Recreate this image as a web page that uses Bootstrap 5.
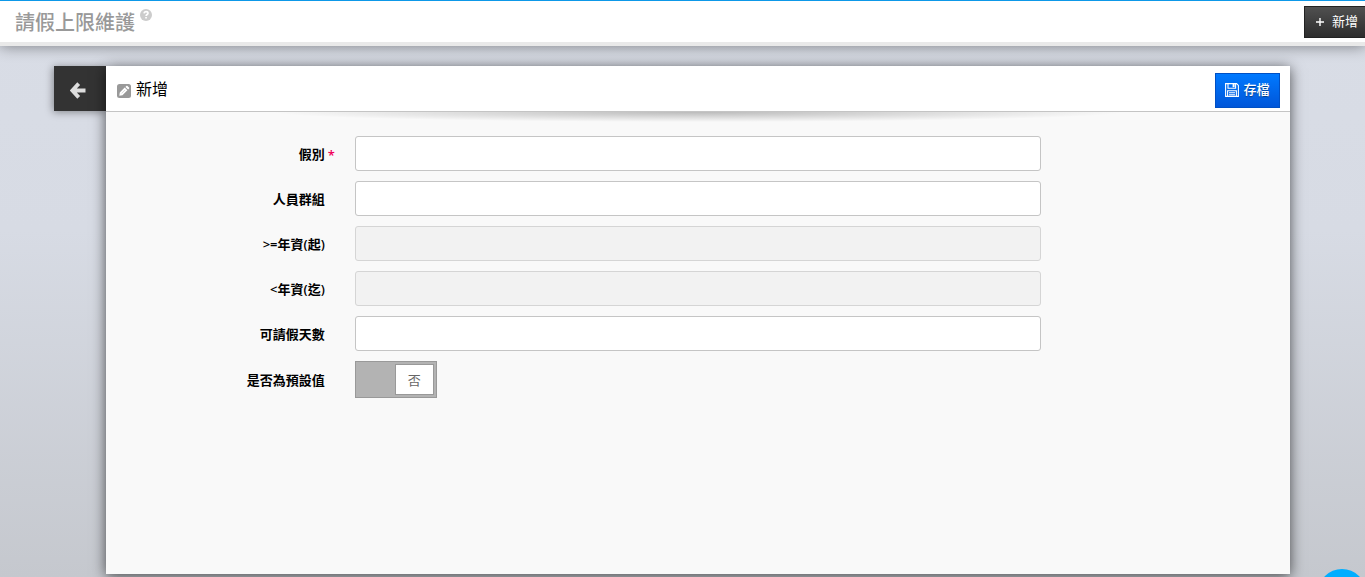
<!DOCTYPE html>
<html lang="zh-Hant">
<head>
<meta charset="utf-8">
<meta name="viewport" content="width=device-width, initial-scale=1">
<title>請假上限維護</title>
<link href="https://cdn.jsdelivr.net/npm/bootstrap@5.3.0/dist/css/bootstrap.min.css" rel="stylesheet">
<style>
  body { font-family: "Open Sans", "Noto Sans CJK TC", sans-serif; font-size: 13px; line-height: 20px; color: #000; background: linear-gradient(#d9dde6 0%, #d7dbe4 40%, #c5c8ce 100%); }
  .topbar { height: 46px; padding-top: 1px; border-top: 1px solid #0d98e8; border-bottom: 4px solid #e9e9e9; box-shadow: 0 0 14px rgba(0,0,0,.45); }
  .page-title { font-size: 20px; line-height: 28px; font-weight: 500; color: #999; padding: 2px 0 0 15px; }
  .help-link { margin: 0 0 14px 5px; line-height: 0; }
  .btn-add { width: 61px; height: 32px; font-size: 13px; color: #fff; background: linear-gradient(#505050, #2d2d2d); border: 1px solid #222; border-right: 0; white-space: nowrap; }
  .workspace { padding: 20px 75px 3px 54px; }
  .btn-back { width: 52px; height: 45px; background: #333; box-shadow: -1px 1px 8px rgba(0,0,0,.4); }
  .panel { min-height: calc(100vh - 69px); background: #f9f9f9; box-shadow: 0 2px 13px rgba(0,0,0,.65); }
  .panel-head { height: 46px; background: #fff; border-bottom: 1px solid #c4c4c4; padding: 0 10px 0 11px; }
  .panel-head h2 { font-size: 16px; line-height: 24px; padding-left: 5px; }
  .btn-save { width: 65px; height: 35px; margin-top: 3px; font-size: 13px; font-weight: 500; color: #fff; background: linear-gradient(#0079ff, #0056d9); border: 1px solid #0050c4; text-shadow: 0 1px 1px rgba(0,0,0,.4); }
  .head-shade { height: 10px; margin-bottom: 14px; background: radial-gradient(ellipse 36% 100% at 50% 0, rgba(0,0,0,.25), transparent); }
  .leave-form { margin: 0 -5px; gap: 10px; }
  .field-label { flex: 0 0 20%; padding-right: 15px; text-align: right; font-weight: 600; }
  .field-box { flex: 0 0 60%; padding: 0 15px; }
  .required-mark { color: #f0005a; left: calc(100% - 12px); top: 1px; }
  .field-box .form-control { height: 35px; border-radius: 3px; border-color: #c5c5c5; font-size: 13px; }
  .field-box .form-control:disabled { background: #f2f2f2; border-color: #d5d5d5; }
  .flip { width: 82px; height: 37px; padding: 2px; background: #b3b3b3; border: 1px solid #999; cursor: pointer; }
  .flip-knob { width: 39px; height: 31px; line-height: 31px; background: #fff; border: 1px solid #999; color: #666; }
  .flip input:checked + .flip-knob { margin-right: auto; }
  .chat-link { width: 48px; height: 48px; right: -1px; bottom: -40px; background: #00aeff; }
</style>
</head>
<body class="min-vh-100 overflow-x-hidden">
<header class="topbar d-flex align-items-center bg-white position-relative">
  <h1 class="page-title mb-0">請假上限維護</h1>
  <a href="#" class="help-link" aria-label="說明">
    <svg width="12" height="12" viewBox="0 0 12 12"><circle cx="6" cy="6" r="6" fill="#ccc"/><path d="M4 4.4Q4.2 2.6 6 2.6Q8 2.6 8 4.2C8 5.5 6.1 5.5 6.1 7" fill="none" stroke="#fff" stroke-width="1.7"/><path d="M5.2 8h1.7v1.6H5.2z" fill="#fff"/></svg>
  </a>
  <button type="button" class="btn btn-add rounded-0 ms-auto p-0 ps-1 d-flex align-items-center justify-content-center gap-2">
    <svg width="8" height="8" viewBox="0 0 8 8"><path d="M4 0v8M0 4h8" stroke="#fff" stroke-width="1.4"/></svg>新增
  </button>
</header>
<main class="workspace d-flex align-items-start">
  <button type="button" class="btn btn-back rounded-0 border-0 p-0 d-flex align-items-center justify-content-center flex-shrink-0" aria-label="返回">
    <svg class="mt-1 me-1" width="17" height="17" viewBox="0 0 17 17"><path d="M8.7 1.6 2.4 8.5l6.3 6.9M3 8.5h12.5" fill="none" stroke="#ddd" stroke-width="3.8"/></svg>
  </button>
  <section class="panel flex-grow-1">
    <div class="panel-head d-flex align-items-center">
      <svg class="mt-1" width="14" height="14" viewBox="0 0 14 14"><rect width="14" height="14" rx="2.5" fill="#999"/><path d="M2.3 11.7 2.8 8.5 7.7 3.6l2.7 2.7-4.9 4.9zM8.4 2.9l.9-.9q.6-.5 1.2 0L12 3.5q.5.6 0 1.2l-.9.9z" fill="#fff"/><path d="M4.7 9.3 8 6" stroke="#bbb" stroke-width=".5"/></svg>
      <h2 class="mb-0 fw-normal">新增</h2>
      <button type="submit" form="leaveForm" class="btn btn-save rounded-0 ms-auto p-0 d-flex align-items-center justify-content-center">
        <svg class="me-1" width="14" height="14" viewBox="0 0 14 14"><path d="M.6.6h11l1.8 1.8v11H.6zM3 .6v4.6h7.6V.6M2.6 13.4V7.8h8.8v5.6M4 9.7h6M4 11.7h6" fill="none" stroke="#fff" stroke-width="1.1"/><path d="M7.6 1h2v3.2h-2z" fill="#fff"/></svg>存檔
      </button>
    </div>
    <div class="head-shade"></div>
    <form id="leaveForm" class="leave-form d-flex flex-column">
      <div class="d-flex align-items-center">
        <label class="field-label position-relative" for="leaveType">假別<span class="required-mark position-absolute">*</span></label>
        <div class="field-box"><input type="text" class="form-control" id="leaveType" required></div>
      </div>
      <div class="d-flex align-items-center">
        <label class="field-label" for="staffGroup">人員群組</label>
        <div class="field-box"><input type="text" class="form-control" id="staffGroup"></div>
      </div>
      <div class="d-flex align-items-center">
        <label class="field-label" for="yearsFrom">&gt;=年資(起)</label>
        <div class="field-box"><input type="text" class="form-control" id="yearsFrom" disabled></div>
      </div>
      <div class="d-flex align-items-center">
        <label class="field-label" for="yearsTo">&lt;年資(迄)</label>
        <div class="field-box"><input type="text" class="form-control" id="yearsTo" disabled></div>
      </div>
      <div class="d-flex align-items-center">
        <label class="field-label" for="leaveDays">可請假天數</label>
        <div class="field-box"><input type="text" class="form-control" id="leaveDays"></div>
      </div>
      <div class="d-flex align-items-center">
        <label class="field-label" for="isDefault">是否為預設值</label>
        <div class="field-box">
          <label class="flip d-flex justify-content-end"><input type="checkbox" class="visually-hidden" id="isDefault"><span class="flip-knob text-center">否</span></label>
        </div>
      </div>
    </form>
  </section>
</main>
<a href="#" class="chat-link position-fixed rounded-circle" aria-label="線上客服"></a>
<script src="https://cdn.jsdelivr.net/npm/bootstrap@5.3.0/dist/js/bootstrap.bundle.min.js"></script>
</body>
</html>
